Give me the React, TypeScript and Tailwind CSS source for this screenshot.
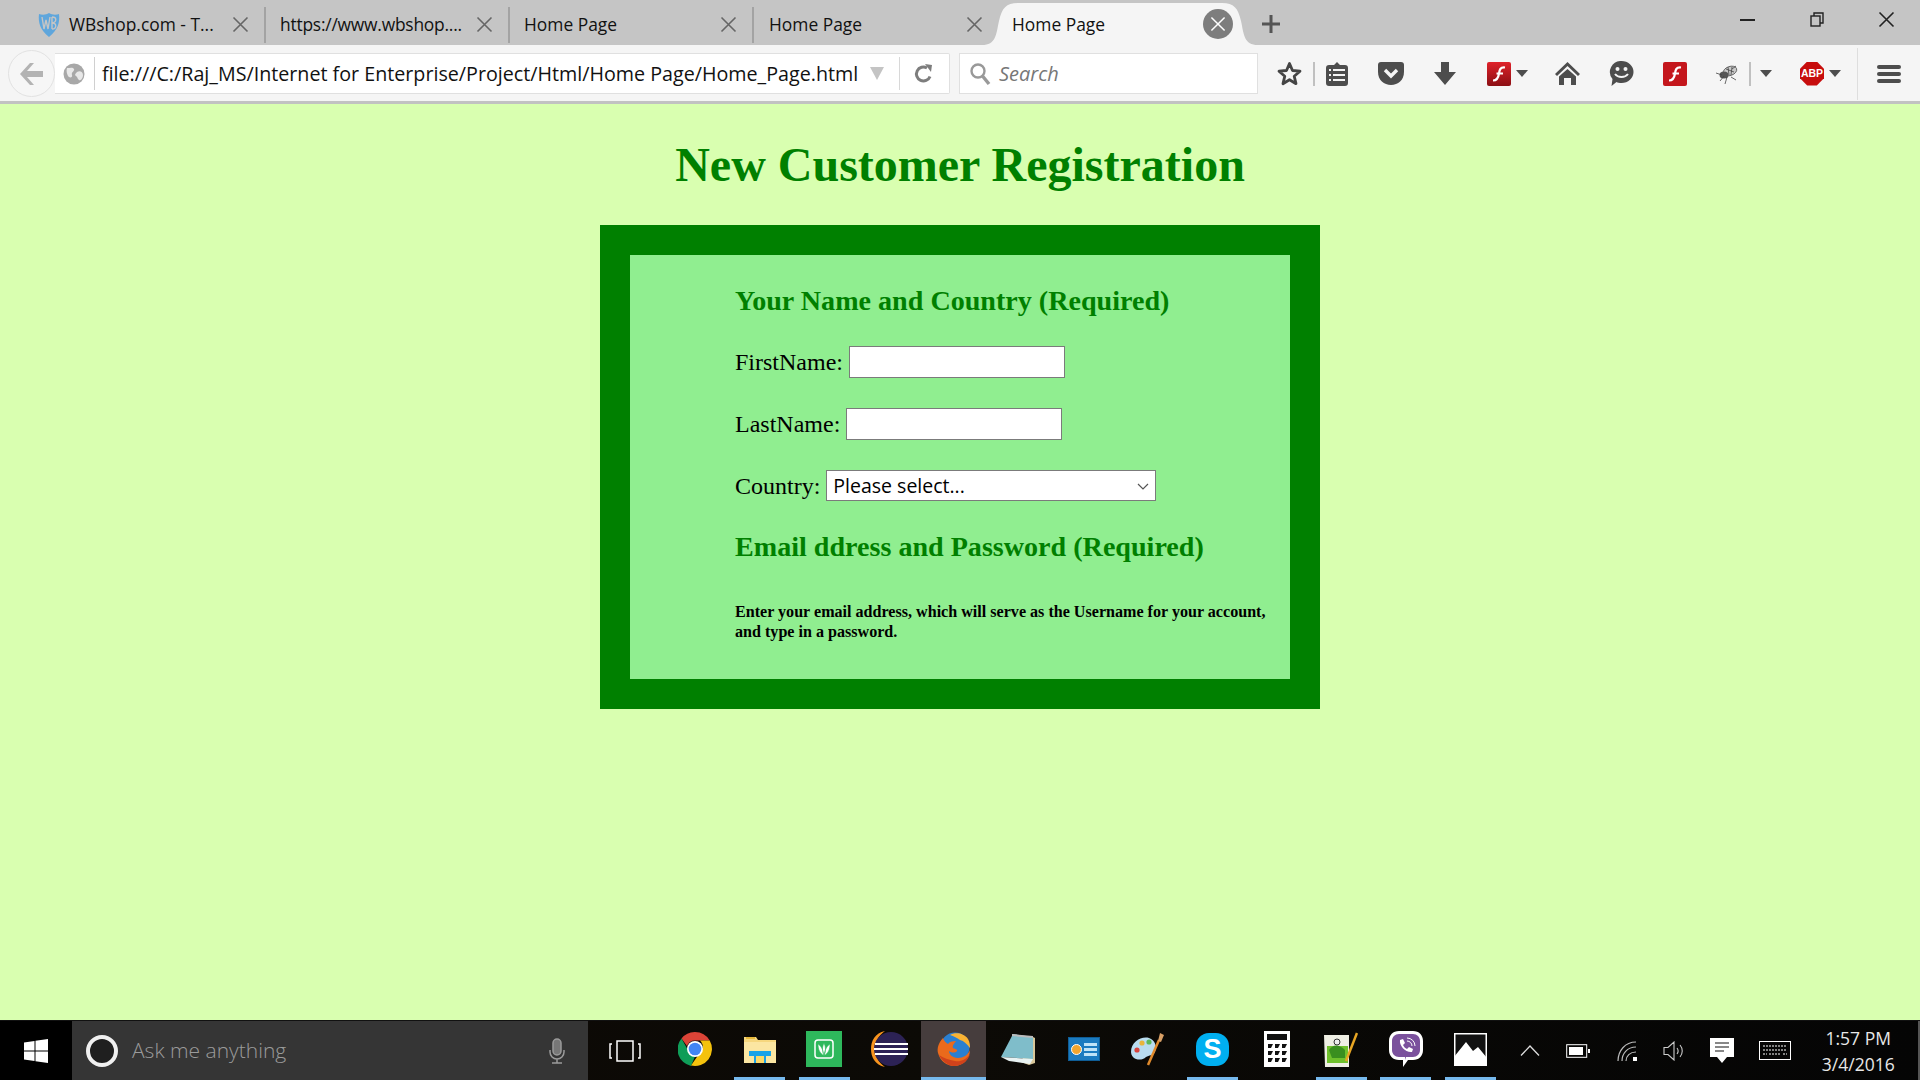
import React from "react";

const ui = "font-['Open_Sans',sans-serif]";
const serif = "font-['Liberation_Serif',serif]";

function CloseX({ c = "#666", s = 17 }: { c?: string; s?: number }) {
  return (
    <svg width={s} height={s} viewBox="0 0 17 17" fill="none" stroke={c} strokeWidth="1.6">
      <path d="M1.5 1.5 15.5 15.5M15.5 1.5 1.5 15.5" />
    </svg>
  );
}

function Tab({ text, icon, tight }: { text: string; icon?: boolean; tight?: boolean }) {
  return (
    <div className="w-[244px] h-[36px] mt-[4px] flex items-center pl-[14px] pr-[15px] border-r-2 border-[#a3a3a3] text-[#111] text-[17.400px]">
      {icon ? (
        <svg width="24" height="26" viewBox="0 0 24 26" className="mr-[8px] ml-[1px]">
          <path d="M2 2c3 1 7 1 10-1 3 2 7 2 10 1 1 8-1 16-10 23C3 18 1 10 2 2z" fill="#5fa6dc" />
          <path d="M5 5l2 12 2-9 2 9 2-12M15 5v12M15 5c5 0 5 5 0 6 5 0 5 6 0 6" stroke="#c5c5c5" strokeWidth="1.4" fill="none" />
        </svg>
      ) : null}
      <span className={`flex-1 whitespace-nowrap ${tight ? "tracking-[-0.22px]" : ""}`}>{text}</span>
      <CloseX />
    </div>
  );
}

function Caret({ c = "#4d4d4d" }: { c?: string }) {
  return (
    <svg width="12" height="7" viewBox="0 0 12 7">
      <path d="M0 0h12L6 7z" fill={c} />
    </svg>
  );
}

function FlashBox({ grad }: { grad?: boolean }) {
  return (
    <div className={`w-[24px] h-[24px] rounded-[2px] flex items-center justify-center ${grad ? "bg-gradient-to-b from-[#e0222a] to-[#8c0f14]" : "bg-[#c4161c]"}`}>
      <svg width="16" height="18" viewBox="0 0 16 18" fill="none" stroke="#fff" strokeWidth="2.2">
        <path d="M14 2.5C9 2 8.500 5 8 8.500S6.500 15.500 2 15.500M5.500 8.500H12" />
      </svg>
    </div>
  );
}

function Toolbar() {
  return (
    <div className="h-[59px] bg-[#f5f5f5] flex items-center shrink-0 border-b-[3px] border-[#c2c2c2] pt-[1px]">
      <div className="ml-[8px] w-[47px] h-[47px] rounded-full border border-[#e2e2e2] bg-[#f6f6f6] flex items-center justify-center shrink-0">
        <svg width="24" height="22" viewBox="0 0 24 22" fill="#b3b3b3" className="mr-[2px]">
          <path d="M11 0h4l-7 8h16v6H8l7 8h-4L1 11z" />
        </svg>
      </div>
      <div className="w-[895px] h-[41px] bg-white border border-l-0 border-[#e0e0e0] rounded-r-[2px] flex items-center shrink-0">
        <svg width="22" height="22" viewBox="0 0 22 22" className="ml-[8px]">
          <circle cx="11" cy="11" r="10.500" fill="#a8a8a8" />
          <path d="M4 5c3 0 6-1 7 1s-3 3-2 6-3 3-4 1-2-5-1-8zM14 9c3-2 6 0 6 3s-2 6-4 5-1-3-3-4 0-3 1-4z" fill="#e8e8e8" />
        </svg>
        <div className="w-px h-[33px] bg-[#d0d0d0] ml-[9px]" />
        <span className={`${ui} ml-[7px] text-[#111] text-[19.700px] whitespace-nowrap w-[768px]`}>file:///C:/Raj_MS/Internet for Enterprise/Project/Html/Home Page/Home_Page.html</span>
        <svg width="14" height="13" viewBox="0 0 14 13">
          <path d="M0 0h14L7 13z" fill="#c4c4c4" />
        </svg>
        <div className="w-px h-[33px] bg-[#d8d8d8] ml-[15px]" />
        <svg width="20" height="20" viewBox="0 0 20 20" fill="none" className="ml-[14px]">
          <path d="M16 12.500A7 7 0 1 1 13 4" stroke="#7d7d7d" strokeWidth="3" />
          <path d="M11 0l7 1-1 7z" fill="#7d7d7d" />
        </svg>
      </div>
      <div className="ml-[9px] w-[299px] h-[41px] bg-white border border-[#e0e0e0] flex items-center shrink-0">
        <svg width="22" height="24" viewBox="0 0 22 24" fill="none" stroke="#999" className="ml-[9px]">
          <circle cx="9" cy="9" r="6.500" strokeWidth="2.400" />
          <path d="M13.500 14 20 22" strokeWidth="3.400" />
        </svg>
        <span className={`${ui} italic ml-[8px] text-[#777] text-[20px]`}>Search</span>
      </div>
      <div className="ml-[8px] w-[47px] flex justify-center">
        <svg width="25" height="25" viewBox="0 0 25 25" fill="none" stroke="#444" strokeWidth="2.800" strokeLinejoin="round">
          <path d="M12.500 2.500 15.500 9.500 23 10.200 17.200 15.200 19 22.700 12.500 18.700 6 22.700 7.800 15.200 2 10.200 9.500 9.500z" />
        </svg>
      </div>
      <div className="w-[2px] h-[24px] bg-[#c0c0c0]" />
      <div className="w-[44px] flex justify-center">
        <svg width="22" height="24" viewBox="0 0 22 24">
          <path d="M3 3h5l3-3 3 3h5a3 3 0 0 1 3 3v15a3 3 0 0 1-3 3H3a3 3 0 0 1-3-3V6a3 3 0 0 1 3-3z" fill="#4d4d4d" />
          <path d="M3 8h2M7 8h12M3 13h2M7 13h12M3 18h2M7 18h12" stroke="#f5f5f5" strokeWidth="2" />
        </svg>
      </div>
      <div className="w-[64px] flex justify-center">
        <svg width="26" height="23" viewBox="0 0 26 23">
          <path d="M3 0h20a3 3 0 0 1 3 3v7c0 8-6 13-13 13S0 18 0 10V3a3 3 0 0 1 3-3z" fill="#4d4d4d" />
          <path d="M7 8l6 6 6-6" stroke="#f5f5f5" strokeWidth="3.400" fill="none" />
        </svg>
      </div>
      <div className="w-[44px] flex justify-center">
        <svg width="22" height="23" viewBox="0 0 22 23" fill="#4d4d4d">
          <path d="M7 0h8v10h7L11 23 0 10h7z" />
        </svg>
      </div>
      <div className="w-[68px] flex items-center pl-[20px] gap-[5px]">
        <FlashBox grad />
        <Caret />
      </div>
      <div className="w-[64px] flex justify-center">
        <svg width="25" height="23" viewBox="0 0 25 23">
          <path d="M12.500 0 25 12l-2 2-10.500-10L2 14l-2-2z" fill="#4d4d4d" />
          <path d="M12.500 7 21 14.500V23h-5v-7H9v7H4v-8.500z" fill="#4d4d4d" />
        </svg>
      </div>
      <div className="w-[44px] flex justify-center">
        <svg width="25" height="25" viewBox="0 0 25 25">
          <path d="M12.500 0a12 11 0 0 1 0 22c-2 0-4-.4-5-1l-5 4 1-7A11 11 0 0 1 12.500 0z" fill="#4d4d4d" />
          <circle cx="8.500" cy="8" r="2" fill="#f5f5f5" />
          <circle cx="16.500" cy="8" r="2" fill="#f5f5f5" />
          <path d="M6 13c3 4 10 4 13 0" stroke="#f5f5f5" strokeWidth="2" fill="none" />
        </svg>
      </div>
      <div className="w-[64px] flex justify-center">
        <FlashBox />
      </div>
      <div className="w-[40px] flex justify-center">
        <svg width="24" height="22" viewBox="0 0 24 22" fill="none">
          <ellipse cx="15" cy="8" rx="7" ry="4.500" fill="#c9c9c9" stroke="#555" strokeWidth=".8" transform="rotate(-20 15 8)" />
          <ellipse cx="9" cy="12" rx="4.500" ry="3.500" fill="#555" />
          <path d="M1 10l6 2M5 18l4-5M10 21l2-7M16 14l5 3M21 3 17 6M13 4l1 8M17 4l-1 8M11 6l8 3" stroke="#444" strokeWidth=".8" />
        </svg>
      </div>
      <div className="w-[6px] flex justify-center">
        <div className="w-[2px] h-[24px] bg-[#c0c0c0]" />
      </div>
      <div className="w-[26px] flex justify-center">
        <Caret />
      </div>
      <div className="w-[66px] flex items-center pl-[21px] gap-[5px]">
        <div className="font-['Liberation_Sans',sans-serif] w-[24px] h-[24px] [clip-path:polygon(30%_0,70%_0,100%_30%,100%_70%,70%_100%,30%_100%,0_70%,0_30%)] bg-[#c70d0d] text-white text-[10.500px] font-bold flex items-center justify-center">ABP</div>
        <Caret />
      </div>
      <div className="w-[24px] flex justify-center">
        <div className="w-px h-[52px] bg-[#dedede]" />
      </div>
      <div className="w-[40px] flex flex-col items-center gap-[3px]">
        <div className="w-[24px] h-[4px] rounded-full bg-[#4d4d4d]" />
        <div className="w-[24px] h-[4px] rounded-full bg-[#4d4d4d]" />
        <div className="w-[24px] h-[4px] rounded-full bg-[#4d4d4d]" />
      </div>
    </div>
  );
}

function TabBar() {
  return (
    <div className="h-[45px] bg-[#c5c5c5] flex items-center shrink-0 pl-[22px]">
      <Tab text="WBshop.com - T..." icon />
      <Tab text="https://www.wbshop...." tight />
      <Tab text="Home Page" />
      <div className="w-[244px] h-[36px] mt-[4px] flex items-center pl-[15px] pr-[15px] text-[#111] text-[17.400px]">
        <span className="flex-1">Home Page</span>
        <CloseX />
      </div>
      <div className="relative w-[276px] h-[45px] -ml-[16px] flex items-center pl-[30px] text-[#111] text-[17.400px] shrink-0">
        <svg width="276" height="45" viewBox="0 0 276 45" className="absolute left-0 top-0">
          <path d="M0 45c14 0 14-10 17-24C20 8 24 3 36 3h204c12 0 16 5 19 18 3 14 3 24 17 24z" fill="#f5f5f5" />
        </svg>
        <span className="relative flex-1 mt-[4px]">Home Page</span>
        <div className="relative w-[30px] h-[30px] mr-[25px] rounded-full bg-[#7d7d7d] flex items-center justify-center mt-[2px]">
          <CloseX c="#fff" s={16} />
        </div>
      </div>
      <svg width="18" height="18" viewBox="0 0 18 18" className="ml-[4px] mt-[2px]" stroke="#555" strokeWidth="3">
        <path d="M9 0v18M0 9h18" />
      </svg>
      <div className="ml-auto flex items-center h-full text-black pb-[6px]">
        <div className="w-[70px] flex justify-center"><div className="w-[15px] h-[2px] bg-[#222]" /></div>
        <div className="w-[70px] flex justify-center">
          <svg width="14" height="15" viewBox="0 0 14 15" fill="none" stroke="#222" strokeWidth="1.400">
            <rect x="1" y="4" width="9" height="10" /><path d="M4 4V1h9v10h-3" />
          </svg>
        </div>
        <div className="w-[68px] flex justify-center"><CloseX c="#222" /></div>
      </div>
    </div>
  );
}

function Form() {
  return (
    <div className="flex-1 bg-[#d9ffb0] flex flex-col items-center">
      <h1 className={`${serif} text-[48px] leading-[55px] font-bold text-[#008000] mt-[33px] w-full text-center`}>New Customer Registration</h1>
      <div className="w-[720px] h-[484px] mt-[33px] border-[30px] border-[#008000] bg-[#90ee90] pl-[105px] shrink-0">
        <h2 className={`${serif} text-[28.100px] leading-[32px] font-bold text-[#008000] mt-[30px]`}>Your Name and Country (Required)</h2>
        <div className={`${serif} text-[24px] text-black flex items-center gap-[6px] h-[32px] mt-[29px]`}>
          <span>FirstName:</span>
          <input className="w-[216px] h-[32px] bg-white border border-[#7b7b7b]" />
        </div>
        <div className={`${serif} text-[24px] text-black flex items-center gap-[6px] h-[32px] mt-[30px]`}>
          <span>LastName:</span>
          <input className="w-[216px] h-[32px] bg-white border border-[#7b7b7b]" />
        </div>
        <div className={`${serif} text-[24px] text-black flex items-center gap-[6px] h-[31px] mt-[30px]`}>
          <span>Country:</span>
          <div className="relative w-[330px] h-[31px]">
            <select className={`${ui} block appearance-none w-full h-full bg-white border border-[#7b7b7b] pl-[6px] text-[19.500px] text-black`}>
              <option>Please select...</option>
            </select>
            <svg width="12" height="8" viewBox="0 0 12 8" fill="none" stroke="#555" strokeWidth="1.200" className="absolute right-[7px] top-[13px]">
              <path d="M1 1l5 5 5-5" />
            </svg>
          </div>
        </div>
        <h2 className={`${serif} text-[28.100px] leading-[32px] font-bold text-[#008000] mt-[30px]`}>Email ddress and Password (Required)</h2>
        <p className={`${serif} text-[16.100px] leading-[20px] font-bold text-black mt-[39px] w-[545px]`}>
          Enter your email address, which will serve as the Username for your account, and type in a password.
        </p>
      </div>
    </div>
  );
}

function TaskSlot({ children, line, active }: { children: React.ReactNode; line?: boolean; active?: boolean }) {
  return (
    <div className={`w-[64.600px] h-full flex flex-col items-center ${active ? "bg-[#463d3d]" : ""}`}>
      <div className="flex-1 flex items-center justify-center">{children}</div>
      <div className={`h-[3px] ${active ? "w-full bg-[#76b9ed]" : line ? "w-[51px] bg-[#76b9ed]" : "w-[51px]"}`} />
    </div>
  );
}

function Taskbar() {
  return (
    <div className="h-[60px] bg-gradient-to-r from-[#0c0805] via-[#0c0a06] to-[#050505] flex items-stretch shrink-0 border-t border-[#111]">
      <div className="w-[72px] bg-black flex items-center justify-center">
        <svg width="24" height="24" viewBox="0 0 24 24" fill="#fff">
          <path d="M0 3.500 10.500 2v9.500H0zM11.500 1.800 24 0v11.500H11.500zM0 12.500h10.500V22L0 20.500zM11.500 12.500H24V24l-12.500-1.800z" />
        </svg>
      </div>
      <div className="w-[516px] bg-[#353535] flex items-center">
        <div className="w-[32px] h-[32px] rounded-full border-[4px] border-[#f0f0f0] ml-[14px] bg-[#1f1f1f]" />
        <span className={`${ui} ml-[14px] text-[21px] text-[#9b9b9b] font-light flex-1`}>Ask me anything</span>
        <svg width="16" height="26" viewBox="0 0 16 26" fill="none" stroke="#9b9b9b" strokeWidth="1.500" className="mr-[23px]">
          <rect x="4" y="1" width="8" height="16" rx="4" fill="#777" /><path d="M1 12v2a7 7 0 0 0 14 0v-2M8 21v4M3 25h10" />
        </svg>
      </div>
      <div className="w-[75px] flex items-center justify-center pr-[1px]">
        <svg width="32" height="24" viewBox="0 0 32 24" fill="none" stroke="#fff" strokeWidth="1.500">
          <rect x="8" y="2" width="16" height="20" /><path d="M3 5H1v14h2M29 5h2v14h-2" />
        </svg>
      </div>
      <TaskSlot>
        <svg width="34" height="34" viewBox="0 0 34 34">
          <path d="M17 0a17 17 0 0 1 14.700 8.500H17a8.500 8.500 0 0 0-8 5.500L3.500 6.500A17 17 0 0 1 17 0z" fill="#db4437" />
          <path d="M3.500 6.500 11 20a8.500 8.500 0 0 0 6 4.500L13 34A17 17 0 0 1 3.500 6.500z" fill="#0f9d58" />
          <path d="M31.700 8.500A17 17 0 0 1 13 33.500L21 22a8.500 8.500 0 0 0 1-13.500z" fill="#f4c20d" />
          <circle cx="17" cy="17" r="8" fill="#fff" /><circle cx="17" cy="17" r="6.300" fill="#4285f4" />
        </svg>
      </TaskSlot>
      <TaskSlot line>
        <svg width="32" height="28" viewBox="0 0 32 28">
          <path d="M0 2h12l2 3h18v23H0z" fill="#f6d77e" /><path d="M0 7h32v21H0z" fill="#fbe6a2" />
          <rect x="2" y="2" width="9" height="2" fill="#e7b93b" />
          <path d="M5 16h22v5h-5v7H10v-7H5z" fill="#1aa3e8" /><rect x="12" y="21" width="8" height="7" fill="#fcd96b" />
        </svg>
      </TaskSlot>
      <TaskSlot line>
        <div className="w-[36px] h-[36px] bg-[#2eb85c] flex items-center justify-center">
          <svg width="20" height="20" viewBox="0 0 20 20" fill="none">
            <rect x="1" y="1" width="18" height="18" rx="3" stroke="#fff" strokeWidth="1.500" />
            <path d="M10 17C6 14 4 11 4 5c3 2 5 5 6 12zM10 17c4-3 6-6 6-12-3 2-5 5-6 12zM10 17C8 12 8 8 10 4c2 4 2 8 0 13z" fill="#fff" stroke="#2eb85c" strokeWidth=".6" />
          </svg>
        </div>
      </TaskSlot>
      <TaskSlot>
        <svg width="38" height="36" viewBox="0 0 38 36">
          <path d="M15 0C5 2 1 10 1 18s4 16 14 18C8 31 5 25 5 18S8 5 15 0z" fill="#f7941e" />
          <circle cx="21" cy="18" r="17" fill="#2c2255" />
          <path d="M5 13h33M4 18h34M5 23h33" stroke="#fff" strokeWidth="2.200" />
        </svg>
      </TaskSlot>
      <TaskSlot active line>
        <svg width="34" height="34" viewBox="0 0 34 34">
          <circle cx="18" cy="15" r="14.500" fill="#2a7fd0" />
          <path d="M13 3c5-3 14-2 18 4 2 3 2 7 2 9-3-4-6-7-10-8-3-2-6-4-10-5z" fill="#f9b233" />
          <path d="M6 6C1 11 0 17 1 21c2 8 9 13 16 13 9 0 16-7 16-16-2 5-7 8-12 8-6 0-9-4-9-7 3 2 6 2 8 0 1-2-3-2-4-3-1-3 2-5 3-7-4 0-7 1-8 3-2-1-4-3-5-6z" fill="#ea6a1c" />
          <path d="M2 23c3 6 9 11 15 11 8 0 14-5 16-12-4 6-10 8-15 7-6-1-12-3-16-6z" fill="#d0421b" />
        </svg>
      </TaskSlot>
      <TaskSlot>
        <svg width="34" height="32" viewBox="0 0 34 32">
          <path d="M32 4l2 1v25l-6 2-8-3z" fill="#d8c79a" />
          <path d="M12 1 32 4v22L0 24z" fill="#7fbdca" /><path d="M11 1l21 2v2L11 3z" fill="#bbb" />
          <path d="M0 24l32 2-3 5-21-3z" fill="#e8f2f2" />
        </svg>
      </TaskSlot>
      <TaskSlot>
        <div className="w-[32px] h-[24px] ml-[2px] bg-[#1b7bc0] border border-[#0f5d96] flex items-center gap-[2px] px-[2px]">
          <div className="w-[11px] h-[11px] rounded-full bg-[#f0a52f] border border-[#fff]" />
          <div className="flex-1 flex flex-col gap-[2px]">
            <div className="h-[3px] bg-[#bfe3f7]" /><div className="h-[3px] bg-[#bfe3f7]" /><div className="h-[3px] bg-[#bfe3f7]" />
          </div>
        </div>
      </TaskSlot>
      <TaskSlot>
        <svg width="34" height="34" viewBox="0 0 34 34" className="ml-[2px]">
          <path d="M0 20C0 10 10 4 18 6c6 2 8 8 6 14-2 4-6 3-9 5-3 3-7 3-10 2-3-1-5-4-5-7z" fill="#b9dcf0" />
          <circle cx="6" cy="18" r="2.600" fill="#d8433c" /><circle cx="11" cy="11" r="2.600" fill="#e9b43b" /><circle cx="18" cy="10" r="2.600" fill="#5cb85c" />
          <path d="M17 33 28 8" stroke="#e08a2c" strokeWidth="2.500" /><path d="M27 9l2-8 4 2-3 7z" fill="#d9a066" />
        </svg>
      </TaskSlot>
      <TaskSlot line>
        <div className="w-[33px] h-[33px] ml-[1px] rounded-[13px] bg-[#00aff0] text-white font-bold text-[27px] leading-none flex items-center justify-center font-['Liberation_Sans',sans-serif]">S</div>
      </TaskSlot>
      <TaskSlot>
        <svg width="26" height="36" viewBox="0 0 26 36">
          <rect width="26" height="36" fill="#fff" /><rect x="3" y="3" width="20" height="6" fill="#111" />
          <path d="M4 13h5l-2 4H4zM11 13h5l-2 4h-3zM18 13h5l-2 4h-3zM4 20h5l-2 4H4zM11 20h5l-2 4h-3zM18 20h5l-2 4h-3zM4 27h5l-2 4H4zM11 27h5l-2 4h-3zM18 27h5l-2 4h-3z" fill="#111" />
        </svg>
      </TaskSlot>
      <TaskSlot line>
        <svg width="34" height="35" viewBox="0 0 34 35">
          <path d="M0 3h25v32H1z" fill="#efefe4" /><rect x="3" y="14" width="21" height="17" fill="#6fc12c" />
          <circle cx="13" cy="10" r="3" fill="#eee" stroke="#333" /><path d="M5 18c4-6 10-6 16 0v8H8z" fill="#3a8f1f" />
          <path d="M22 29 33 1" stroke="#e8a623" strokeWidth="2.500" />
        </svg>
      </TaskSlot>
      <TaskSlot line>
        <svg width="34" height="36" viewBox="0 0 34 36">
          <path d="M10 0h14c6 0 10 4 10 10v9c0 6-4 10-10 10h-5l-5 7v-7h-4C4 29 0 25 0 19v-9C0 4 4 0 10 0z" fill="#fff" />
          <path d="M10 3h14c4 0 7 3 7 7v9c0 4-3 7-7 7h-7l-1 3v-3h-6c-4 0-7-3-7-7v-9c0-4 3-7 7-7z" fill="#7b519d" />
          <path d="M11 9l3-1 2 4-2 2c1 2 2 3 4 4l2-2 4 2-1 3c-6 1-13-6-12-12z" fill="#fff" />
          <path d="M18 7a8 8 0 0 1 8 8M18 10a5 5 0 0 1 5 5" stroke="#fff" fill="none" />
        </svg>
      </TaskSlot>
      <TaskSlot line>
        <svg width="33" height="33" viewBox="0 0 33 33">
          <rect width="33" height="33" fill="#fff" /><rect x="1.500" y="1.500" width="30" height="30" fill="#111" />
          <path d="M0 33V24L12 9l7 9 5-4 9 11v8z" fill="#fff" />
        </svg>
      </TaskSlot>
      <div className="w-[54px] flex items-center justify-center">
        <svg width="20" height="11" viewBox="0 0 20 11" fill="none" stroke="#ddd" strokeWidth="1.300"><path d="M1 10.500 10 1l9 9.500" /></svg>
      </div>
      <div className="w-[42px] flex items-center justify-center">
        <svg width="24" height="14" viewBox="0 0 24 14" fill="none">
          <rect x=".7" y=".7" width="20" height="12.600" stroke="#fff" /><rect x="3" y="3" width="14" height="8" fill="#fff" /><rect x="22" y="5" width="2" height="4" fill="#fff" />
        </svg>
      </div>
      <div className="w-[56px] flex items-center justify-center">
        <svg width="20" height="20" viewBox="0 0 20 20" fill="none" stroke="#bbb" strokeWidth="1.200">
          <path d="M1 20C1 10 8 1 19 1M5 20c0-7 5-14 14-14M9 20c0-5 4-9 10-9" /><rect x="16" y="16" width="4" height="4" fill="#fff" stroke="none" />
        </svg>
      </div>
      <div className="w-[38px] flex items-center justify-center">
        <svg width="22" height="20" viewBox="0 0 22 20" fill="none" stroke="#ccc" strokeWidth="1.100">
          <path d="M1 6.500h4L11 1v18l-6-5.500H1zM14 7c1.500 2 1.500 4 0 6M17 4c3 3.500 3 8.500 0 12" />
        </svg>
      </div>
      <div className="w-[58px] flex items-center justify-center">
        <svg width="24" height="25" viewBox="0 0 24 25">
          <path d="M0 0h24v19h-7l-5 6-5-6H0z" fill="#fff" /><path d="M5 5h14M5 9h14M5 13h9" stroke="#111" strokeWidth="1.200" />
        </svg>
      </div>
      <div className="w-[48px] flex items-center justify-center">
        <svg width="32" height="19" viewBox="0 0 32 19" fill="none" stroke="#fff">
          <rect x=".5" y=".5" width="31" height="18" /><path d="M4 5h24M4 9h24M4 13h4M10 13h12M24 13h4" strokeDasharray="2 1" />
        </svg>
      </div>
      <div className={`${ui} w-[119px] flex flex-col items-center justify-center text-[#e8e8e8] text-[17.500px] leading-[26px]`}>
        <span>1:57 PM</span>
        <span>3/4/2016</span>
      </div>
      <div className="w-[2px] bg-[#555]" />
    </div>
  );
}

export default function App() {
  return (
    <div className={`${ui} w-[1920px] h-[1080px] flex flex-col overflow-hidden`}>
      <TabBar />
      <Toolbar />
      <Form />
      <Taskbar />
    </div>
  );
}
